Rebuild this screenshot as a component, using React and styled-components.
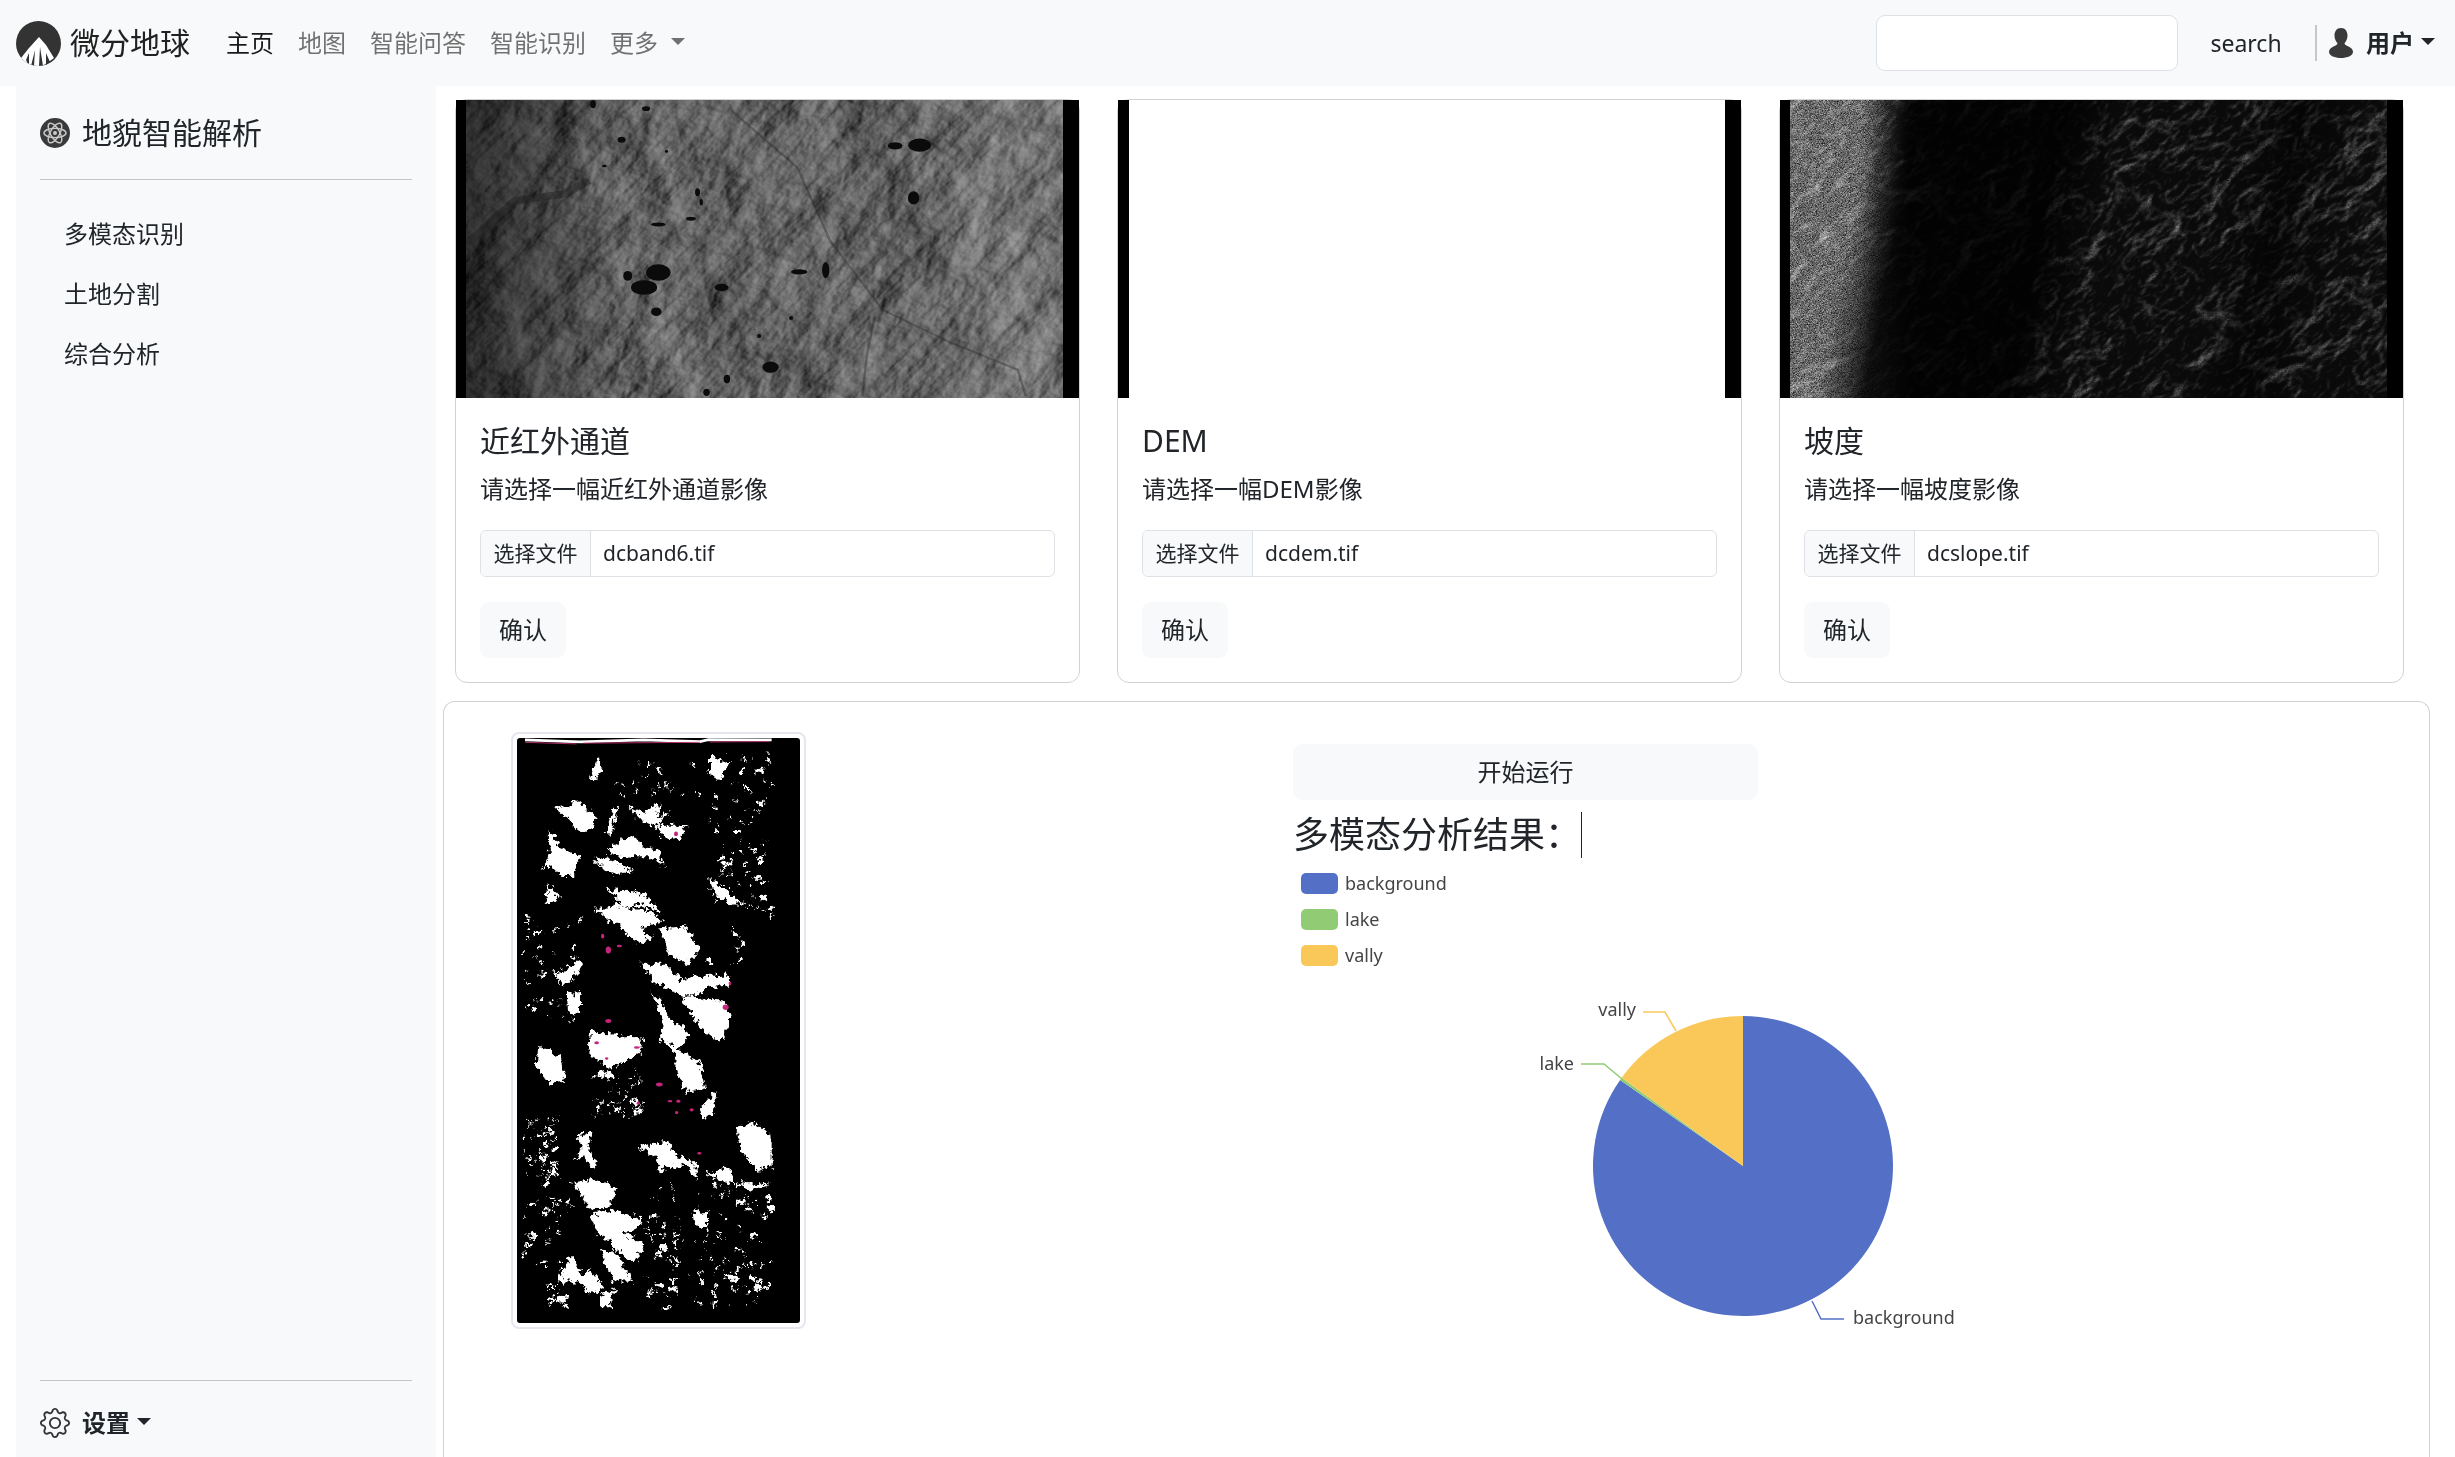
import React from "react";
import styled, { createGlobalStyle } from "styled-components";
import { BsGear } from "react-icons/bs";

const GlobalStyle = createGlobalStyle`
  html, body {
    margin: 0;
    height: 100%;
    overflow: hidden;
    background: #fff;
  }
  body {
    font-family: "Noto Sans", "Noto Sans CJK SC", sans-serif;
    font-size: 24px;
    line-height: 36px;
    color: #212529;
  }
  * { box-sizing: border-box; }
`;

const Page = styled.div`
  height: 1457px;
  display: flex;
  flex-direction: column;
  overflow: hidden;
`;

// Navbar
const Navbar = styled.nav`
  height: 86px;
  flex: none;
  display: flex;
  align-items: center;
  background: #f8f9fa;
  padding: 0 20px 0 16px;
`;
const Brand = styled.div`
  display: flex;
  align-items: center;
  gap: 9px;
  font-size: 30px;
  color: #212121;
  margin-right: 24px;
`;
const NavItem = styled.a`
  display: flex;
  align-items: center;
  padding: 0 12px;
  color: ${(p) => (p.$active ? "rgba(0,0,0,.9)" : "rgba(0,0,0,.55)")};
`;
const Caret = styled.span`
  display: inline-block;
  margin-left: ${(p) => p.$gap || 7}px;
  margin-bottom: 3px;
  border-top: 7px solid currentColor;
  border-left: 7px solid transparent;
  border-right: 7px solid transparent;
`;
const Spacer = styled.div`
  flex: 1;
`;
const SearchInput = styled.input`
  width: 302px;
  height: 56px;
  background: #fff;
  border: 1px solid #dee2e6;
  border-radius: 9px;
  outline: none;
`;
const SearchButton = styled.button`
  width: 102px;
  height: 56px;
  margin: 0 18px 0 17px;
  padding: 0;
  border: none;
  background: transparent;
  font: inherit;
  font-size: 23px;
  color: #212529;
`;
const NavDivider = styled.div`
  width: 2px;
  height: 36px;
  background: #c6c7c8;
`;
const UserMenu = styled.div`
  display: flex;
  align-items: center;
  margin-left: 12px;
  font-weight: 700;
  color: #212529;
  svg { margin-right: 13px; }
`;

// Layout under the navbar
const Body = styled.div`
  flex: 1;
  min-height: 0;
  display: flex;
  padding-left: 16px;
`;
const Sidebar = styled.aside`
  width: 420px;
  flex: none;
  display: flex;
  flex-direction: column;
  background: #f8f9fa;
  padding: 24px 24px 16px;
`;
const SideTitle = styled.div`
  display: flex;
  align-items: center;
  gap: 12px;
  height: 45px;
  font-size: 30px;
  color: #212529;
`;
const Rule = styled.hr`
  width: 100%;
  height: 1px;
  margin: 24px 0;
  border: none;
  background: #c4c5c6;
`;
const SideList = styled.div`
  flex: 1;
  display: flex;
  flex-direction: column;
`;
const SideLink = styled.a`
  padding: 12px 24px;
  color: #212529;
`;
const SettingsMenu = styled.div`
  display: flex;
  align-items: center;
  gap: 12px;
  font-weight: 700;
  color: #212529;
  svg { color: #333; }
`;
const SettingsLabel = styled.span`
  display: flex;
  align-items: center;
`;

const Main = styled.main`
  flex: 1;
  min-width: 0;
  padding: 13px 25px 0 7px;
  display: flex;
  flex-direction: column;
  gap: 18px;
`;
const CardRow = styled.div`
  display: flex;
  gap: 37px;
  padding-left: 12px;
`;
const Card = styled.section`
  width: 625px;
  border: 1px solid #d2d2d2;
  border-radius: 12px;
  background: #fff;
`;
const CardImage = styled.div`
  height: 298px;
  background: #000;
  padding: 0 16px 0 ${(p) => p.$left}px;
  svg { display: block; width: 100%; height: 100%; }
`;
const BlankImage = styled.div`
  width: 100%;
  height: 100%;
  background: #fff;
`;
const CardBody = styled.div`
  padding: 25px 24px 24px;
`;
const CardTitle = styled.h5`
  margin: 0 0 12px;
  font-size: 30px;
  line-height: 36px;
  font-weight: 400;
`;
const CardText = styled.p`
  margin: 0 0 23px;
`;
const FileInput = styled.div`
  height: 47px;
  display: flex;
  align-items: center;
  border: 1px solid #dee2e6;
  border-radius: 6px;
  overflow: hidden;
  font-size: 21px;
  color: #212529;
`;
const FileButton = styled.span`
  width: 110px;
  height: 100%;
  flex: none;
  display: flex;
  align-items: center;
  justify-content: center;
  padding-bottom: 2px;
  background: #f8f9fa;
  border-right: 1px solid #dee2e6;
`;
const FileName = styled.span`
  padding: 0 0 2px 12px;
`;
const LightButton = styled.button`
  display: block;
  height: 56px;
  width: ${(p) => p.$width || 86}px;
  padding: 0;
  border: none;
  border-radius: 9px;
  background: #f8f9fa;
  font: inherit;
  color: #212529;
`;
const ConfirmRow = styled.div`
  margin-top: 25px;
`;

// Result panel
const ResultPanel = styled.section`
  flex: 1;
  display: flex;
  gap: 487px;
  padding: 30px 0 0 67px;
  border: 1px solid #d2d2d2;
  border-bottom: none;
  border-radius: 12px 12px 0 0;
`;
const Thumbnail = styled.div`
  width: 295px;
  height: 597px;
  flex: none;
  padding: 4px;
  background: #fff;
  border: 2px solid #e6e6ee;
  border-radius: 8px;
  svg { display: block; width: 100%; height: 100%; border-radius: 3px; }
`;
const ResultColumn = styled.div`
  padding-top: 12px;
  flex: 1;
`;
const ResultHeading = styled.h3`
  display: flex;
  align-items: center;
  height: 46px;
  margin: 12px 0 0;
  font-size: 36px;
  line-height: 46px;
  font-weight: 400;
`;
const TypingCursor = styled.span`
  width: 1px;
  height: 46px;
  background: #222;
`;
const ChartBox = styled.div`
  margin-top: 1px;
  svg { display: block; }
`;

function LogoIcon() {
  return (
    <svg width="45" height="45" viewBox="0 0 45 45">
      <defs>
        <clipPath id="logoClip">
          <circle cx="22.5" cy="22.5" r="22.5" />
        </clipPath>
      </defs>
      <circle cx="22.5" cy="22.5" r="22.5" fill="#333" />
      <g clipPath="url(#logoClip)">
        <path d="M23 16 L30 24 L38 37 L31 42 L26 45 L12 45 L5 37 L13 27 Z" fill="#fff" />
        <path d="M15 45 L19 29 L18 45 Z M23 45 L24 26 L27 45 Z M10 39 L13 32 L13 45 Z M30 45 L30 32 L34 41 Z" fill="#333" />
      </g>
    </svg>
  );
}

function AtomIcon() {
  return (
    <svg width="30" height="30" viewBox="0 0 30 30">
      <circle cx="15" cy="15" r="15" fill="#3a3a3a" />
      <g fill="none" stroke="#c9c9c9" strokeWidth="1.4">
        <ellipse cx="15" cy="15" rx="11" ry="4.6" />
        <ellipse cx="15" cy="15" rx="11" ry="4.6" transform="rotate(60 15 15)" />
        <ellipse cx="15" cy="15" rx="11" ry="4.6" transform="rotate(120 15 15)" />
      </g>
      <circle cx="15" cy="15" r="2" fill="#c9c9c9" />
    </svg>
  );
}

function UserIcon() {
  return (
    <svg width="24" height="30" viewBox="0 0 24 30">
      <path
        d="M12 0 C16.5 0 18.5 3.6 18.5 7.6 C18.5 11 17 13.6 15.6 15 C15.4 16.4 16.5 17 19 18.2 C22.4 19.8 24 21.6 24 24 C24 27.8 18 30 12 30 C6 30 0 27.8 0 24 C0 21.6 1.6 19.8 5 18.2 C7.5 17 8.6 16.4 8.4 15 C7 13.6 5.5 11 5.5 7.6 C5.5 3.6 7.5 0 12 0 Z"
        fill="#3a3a3a"
      />
    </svg>
  );
}

const NIR_LAKES = [
  [420, 147, 10, 9], [1150, 163, 28, 20], [1090, 165, 18, 11], [510, 547, 30, 25],
  [475, 592, 32, 22], [435, 557, 11, 15], [505, 665, 13, 13], [785, 832, 20, 17],
  [1135, 322, 14, 20], [590, 385, 12, 6], [606, 305, 6, 12], [665, 592, 17, 11],
  [920, 540, 9, 24], [350, 40, 7, 12], [480, 53, 10, 7], [510, 402, 18, 6],
  [678, 868, 8, 13], [628, 908, 8, 11], [615, 335, 4, 10], [855, 545, 20, 8],
  [378, 226, 6, 4], [530, 182, 4, 4], [835, 684, 5, 6], [757, 738, 5, 6],
];

function NirImage() {
  return (
    <svg viewBox="39 27 1462 898" preserveAspectRatio="none">
      <defs>
        <filter id="nirRelief" x="0" y="0" width="100%" height="100%" colorInterpolationFilters="sRGB">
          <feTurbulence type="fractalNoise" baseFrequency="0.0075 0.0042" numOctaves="7" seed="23" />
          <feDiffuseLighting surfaceScale="15" diffuseConstant="1.05" lightingColor="#fff">
            <feDistantLight azimuth="120" elevation="50" />
          </feDiffuseLighting>
          <feComponentTransfer>
            <feFuncR type="linear" slope="1.1" intercept="-0.5" />
            <feFuncG type="linear" slope="1.1" intercept="-0.5" />
            <feFuncB type="linear" slope="1.1" intercept="-0.5" />
          </feComponentTransfer>
        </filter>
        <linearGradient id="nirShade" x1="0" x2="1" y1="0" y2="0">
          <stop offset="0" stopColor="#000" stopOpacity="0.55" />
          <stop offset="0.16" stopColor="#000" stopOpacity="0.25" />
          <stop offset="0.26" stopColor="#000" stopOpacity="0" />
          <stop offset="0.75" stopColor="#fff" stopOpacity="0.02" />
          <stop offset="0.95" stopColor="#fff" stopOpacity="0.12" />
        </linearGradient>
      </defs>
      <g transform="rotate(40 770 476)">
        <rect x="-230" y="-524" width="2000" height="2000" fill="#666" filter="url(#nirRelief)" />
      </g>
      <rect x="39" y="27" width="1462" height="898" fill="url(#nirShade)" />
      <g fill="none" stroke="#222" strokeOpacity="0.35" strokeWidth="6">
        <path d="M690 60 L850 230 L930 450 L1060 660 L1230 760 L1390 840 L1410 920" />
        <path d="M1040 680 L1020 800 L1010 920" />
        <path d="M40 460 L160 330 L280 310 L340 270" strokeWidth="22" strokeOpacity="0.5" />
      </g>
      <g fill="#0b0b0b">
        {NIR_LAKES.map(([cx, cy, rx, ry]) => (
          <ellipse key={`${cx}-${cy}`} cx={cx} cy={cy} rx={rx} ry={ry} />
        ))}
      </g>
    </svg>
  );
}

function SlopeImage() {
  return (
    <svg viewBox="49 27 1462 898" preserveAspectRatio="none">
      <defs>
        <filter id="slopeLines" x="0" y="0" width="100%" height="100%" colorInterpolationFilters="sRGB">
          <feTurbulence type="fractalNoise" baseFrequency="0.0055 0.0034" numOctaves="5" seed="8" />
          <feDiffuseLighting surfaceScale="50" diffuseConstant="1" lightingColor="#fff" result="lit">
            <feDistantLight azimuth="0" elevation="90" />
          </feDiffuseLighting>
          <feComponentTransfer result="edges">
            <feFuncR type="linear" slope="-1.9" intercept="1.85" />
            <feFuncG type="linear" slope="-1.9" intercept="1.85" />
            <feFuncB type="linear" slope="-1.9" intercept="1.85" />
          </feComponentTransfer>
          <feTurbulence type="fractalNoise" baseFrequency="0.6 0.7" numOctaves="2" seed="4" />
          <feColorMatrix values="0 0 0 0 0  0 0 0 0 0  0 0 0 0 0  2.4 0 0 0 -0.4" />
          <feComposite in="edges" operator="in" />
        </filter>
        <filter id="slopeGrain" x="0" y="0" width="100%" height="100%" colorInterpolationFilters="sRGB">
          <feTurbulence type="fractalNoise" baseFrequency="0.3 0.4" numOctaves="3" seed="12" />
          <feColorMatrix values="0.9 0 0 0 -0.06  0.9 0 0 0 -0.06  0.9 0 0 0 -0.06  0 0 0 0 1" />
        </filter>
        <linearGradient id="slopeGrainFade" x1="0" x2="1" y1="0" y2="0">
          <stop offset="0" stopColor="#fff" />
          <stop offset="0.12" stopColor="#fff" />
          <stop offset="0.2" stopColor="#000" />
        </linearGradient>
        <mask id="slopeGrainMask">
          <rect x="49" y="27" width="1462" height="898" fill="url(#slopeGrainFade)" />
        </mask>
        <linearGradient id="slopeShade" x1="0" x2="1" y1="0" y2="0.1">
          <stop offset="0.14" stopColor="#000" stopOpacity="0" />
          <stop offset="0.22" stopColor="#000" stopOpacity="0.85" />
          <stop offset="0.46" stopColor="#000" stopOpacity="0.85" />
          <stop offset="0.56" stopColor="#000" stopOpacity="0.15" />
          <stop offset="0.76" stopColor="#000" stopOpacity="0.2" />
          <stop offset="0.85" stopColor="#000" stopOpacity="0.6" />
          <stop offset="0.95" stopColor="#000" stopOpacity="0.2" />
        </linearGradient>
      </defs>
      <rect x="49" y="27" width="1462" height="898" fill="#0c0c0c" />
      <g mask="url(#slopeGrainMask)">
        <rect x="49" y="27" width="1462" height="898" filter="url(#slopeGrain)" />
      </g>
      <g style={{ mixBlendMode: "screen" }} transform="rotate(40 780 476)">
        <rect x="-220" y="-524" width="2000" height="2000" filter="url(#slopeLines)" />
      </g>
      <rect x="49" y="27" width="1462" height="898" fill="url(#slopeShade)" />
    </svg>
  );
}

// Big shapes traced by eye over the result mask
const MASK_BLOBS = [
  "165,225 240,210 275,235 285,265 250,290 215,265",
  "145,280 165,300 185,330 240,345 215,400 185,400 150,370 125,380 150,340",
  "320,330 400,295 430,325 470,330 495,370 450,350 400,350 350,345",
  "315,290 340,225 355,220 335,290",
  "380,220 430,240 480,210 470,250 510,235 470,270 545,270 560,265 540,310 490,300 465,270 420,255",
  "270,150 295,95 305,125 285,155",
  "280,345 320,350 400,385 340,395 290,365",
  "140,420 180,445 155,470 140,465",
  "320,430 430,440 480,490 420,470 360,480 290,495 360,465",
  "360,530 390,495 440,550 470,545 420,570",
  "420,620 500,620 540,660 600,650 690,650 690,675 620,680 590,700 540,700 460,660",
  "450,690 480,710 510,760 570,800 530,840 480,810 490,760",
  "540,700 680,715 690,770 660,820 600,780 570,740",
  "520,830 600,870 615,935 560,945 530,890",
  "600,990 650,940 640,1000 610,1015",
  "230,1060 275,1045 265,1090 295,1130 270,1135 250,1105 225,1120 245,1080",
  "410,1085 500,1070 540,1110 590,1125 590,1170 560,1130 520,1135 480,1145 470,1110",
  "710,1040 760,1020 815,1060 815,1135 770,1145 720,1090",
  "615,1150 690,1135 700,1180 650,1165",
  "215,1175 280,1165 350,1190 330,1235 270,1240",
  "275,1255 340,1245 425,1265 410,1290 365,1300 435,1330 405,1380 350,1345 330,1320 290,1305",
  "300,1350 340,1345 400,1425 340,1425",
  "170,1425 210,1360 250,1410 270,1395 315,1440 270,1455 230,1425",
  "115,825 180,855 195,915 150,925 110,880",
  "630,95 690,110 665,150 630,145",
  "165,655 215,625 242,605 242,635 190,675",
  "270,790 430,810 420,850 330,885 265,850",
  "630,400 700,450 740,470 690,470 640,440",
  "480,530 560,525 600,590 560,620 500,590",
  "430,620 500,625 520,660 460,670",
  "720,1170 810,1180 770,1195 740,1190",
  "580,1240 620,1255 622,1290 585,1280",
  "300,1460 345,1440 330,1490 300,1490",
  "280,480 430,480 490,510 420,530 340,520",
  "200,700 240,690 240,750 205,745",
];

// Regions that only hold small specks: x, y, w, h, count
const SPECK_ZONES = [
  [630, 80, 185, 420, 90], [65, 1010, 110, 170, 55], [440, 1180, 375, 320, 150],
  [270, 880, 160, 130, 50], [340, 110, 260, 90, 30], [70, 500, 175, 280, 45],
  [65, 1200, 150, 180, 36], [140, 1420, 60, 70, 14], [630, 520, 110, 100, 10],
];

function specks() {
  let seed = 7;
  const next = () => {
    seed = (seed * 16807) % 2147483647;
    return seed / 2147483647;
  };
  const out = [];
  SPECK_ZONES.forEach(([x, y, w, h, count]) => {
    for (let i = 0; i < count; i++) {
      const big = next() > 0.85;
      out.push([x + next() * w, y + next() * h, (big ? 7 : 1.5) + next() * 5, (big ? 4 : 1) + next() * 3]);
    }
  });
  return out;
}

const PINK_SPOTS = [
  [528, 291, 6, 6], [325, 585, 8, 9], [358, 575, 8, 3], [308, 550, 5, 6], [677, 730, 9, 7],
  [325, 765, 9, 5], [290, 820, 7, 4], [478, 926, 10, 5], [510, 968, 7, 3], [535, 968, 6, 4],
  [530, 997, 5, 4], [575, 990, 6, 4], [415, 973, 5, 4], [598, 1100, 6, 3], [410, 832, 8, 3],
  [690, 670, 4, 5], [320, 860, 5, 3],
];

function MaskImage() {
  return (
    <svg viewBox="51 48 849 1482" preserveAspectRatio="none">
      <defs>
        <filter id="maskRough" x="0" y="0" width="100%" height="100%">
          <feTurbulence type="fractalNoise" baseFrequency="0.07" numOctaves="4" seed="3" />
          <feDisplacementMap in="SourceGraphic" scale="30" xChannelSelector="R" yChannelSelector="G" />
          <feMorphology operator="dilate" radius="1" />
          <feGaussianBlur stdDeviation="0.8" />
        </filter>
      </defs>
      <rect x="51" y="48" width="849" height="1482" fill="#000" />
      <g filter="url(#maskRough)" fill="#fff">
        {MASK_BLOBS.map((points) => (
          <polygon key={points} points={points} />
        ))}
        {specks().map(([cx, cy, rx, ry]) => (
          <ellipse key={`${cx}-${cy}`} cx={cx} cy={cy} rx={rx} ry={ry} />
        ))}
      </g>
      <path d="M75 53 L240 58 L430 53 L600 57 L625 52 L815 53" fill="none" stroke="#fff" strokeWidth="7" />
      <path d="M75 59 L230 63 M250 61 L600 59 M630 58 L810 57" fill="none" stroke="#c2326f" strokeWidth="2.5" />
      <g fill="#c4247c">
        {PINK_SPOTS.map(([cx, cy, rx, ry]) => (
          <ellipse key={`${cx}-${cy}`} cx={cx} cy={cy} rx={rx} ry={ry} />
        ))}
      </g>
    </svg>
  );
}

const PIE = { x: 450, y: 307, r: 150 };
const SLICES = [
  { from: 0, to: 305, color: "#5470c6" },
  { from: 305, to: 306, color: "#91cc75" },
  { from: 306, to: 360, color: "#fac858" },
];
const LEGEND = [
  { name: "background", color: "#5470c6" },
  { name: "lake", color: "#91cc75" },
  { name: "vally", color: "#fac858" },
];
const LABELS = [
  { name: "background", x: 560, y: 465, anchor: "start", color: "#5470c6", line: "519,442 528,460 551,460" },
  { name: "lake", x: 281, y: 211, anchor: "end", color: "#91cc75", line: "329,220 311,205 288,205" },
  { name: "vally", x: 343, y: 157, anchor: "end", color: "#fac858", line: "383,172 372,153 350,153" },
];

function slicePath({ from, to }) {
  const point = (deg) => {
    const a = (deg * Math.PI) / 180;
    return `${PIE.x + PIE.r * Math.sin(a)} ${PIE.y - PIE.r * Math.cos(a)}`;
  };
  const large = to - from > 180 ? 1 : 0;
  return `M${PIE.x} ${PIE.y} L${point(from)} A${PIE.r} ${PIE.r} 0 ${large} 1 ${point(to)} Z`;
}

function PieChart() {
  return (
    <svg width="1000" height="520" viewBox="0 0 1000 520" fontFamily="Noto Sans, sans-serif" fontSize="18">
      {LEGEND.map((item, i) => (
        <g key={item.name}>
          <rect x="8" y={14 + i * 36} width="37" height="21" rx="5" fill={item.color} />
          <text x="52" y={31 + i * 36} fill="#444">
            {item.name}
          </text>
        </g>
      ))}
      {SLICES.map((slice) => (
        <path key={slice.color} d={slicePath(slice)} fill={slice.color} />
      ))}
      {LABELS.map((label) => (
        <g key={label.name}>
          <polyline points={label.line} fill="none" stroke={label.color} strokeWidth="1.5" />
          <text x={label.x} y={label.y} textAnchor={label.anchor} fill="#444">
            {label.name}
          </text>
        </g>
      ))}
    </svg>
  );
}

const CARDS = [
  { title: "近红外通道", text: "请选择一幅近红外通道影像", file: "dcband6.tif", left: 10, image: <NirImage /> },
  { title: "DEM", text: "请选择一幅DEM影像", file: "dcdem.tif", left: 11, image: <BlankImage /> },
  { title: "坡度", text: "请选择一幅坡度影像", file: "dcslope.tif", left: 10, image: <SlopeImage /> },
];

export default function App() {
  return (
    <Page>
      <GlobalStyle />
      <Navbar>
        <Brand>
          <LogoIcon />
          微分地球
        </Brand>
        <NavItem $active>主页</NavItem>
        <NavItem>地图</NavItem>
        <NavItem>智能问答</NavItem>
        <NavItem>智能识别</NavItem>
        <NavItem>
          更多
          <Caret $gap={13} />
        </NavItem>
        <Spacer />
        <SearchInput />
        <SearchButton>search</SearchButton>
        <NavDivider />
        <UserMenu>
          <UserIcon />
          用户
          <Caret />
        </UserMenu>
      </Navbar>
      <Body>
        <Sidebar>
          <SideTitle>
            <AtomIcon />
            地貌智能解析
          </SideTitle>
          <Rule />
          <SideList>
            <SideLink>多模态识别</SideLink>
            <SideLink>土地分割</SideLink>
            <SideLink>综合分析</SideLink>
          </SideList>
          <Rule />
          <SettingsMenu>
            <BsGear size={30} />
            <SettingsLabel>
              设置
              <Caret />
            </SettingsLabel>
          </SettingsMenu>
        </Sidebar>
        <Main>
          <CardRow>
            {CARDS.map((card) => (
              <Card key={card.title}>
                <CardImage $left={card.left}>{card.image}</CardImage>
                <CardBody>
                  <CardTitle>{card.title}</CardTitle>
                  <CardText>{card.text}</CardText>
                  <FileInput>
                    <FileButton>选择文件</FileButton>
                    <FileName>{card.file}</FileName>
                  </FileInput>
                  <ConfirmRow>
                    <LightButton>确认</LightButton>
                  </ConfirmRow>
                </CardBody>
              </Card>
            ))}
          </CardRow>
          <ResultPanel>
            <Thumbnail>
              <MaskImage />
            </Thumbnail>
            <ResultColumn>
              <LightButton $width={465}>开始运行</LightButton>
              <ResultHeading>
                多模态分析结果：
                <TypingCursor />
              </ResultHeading>
              <ChartBox>
                <PieChart />
              </ChartBox>
            </ResultColumn>
          </ResultPanel>
        </Main>
      </Body>
    </Page>
  );
}
